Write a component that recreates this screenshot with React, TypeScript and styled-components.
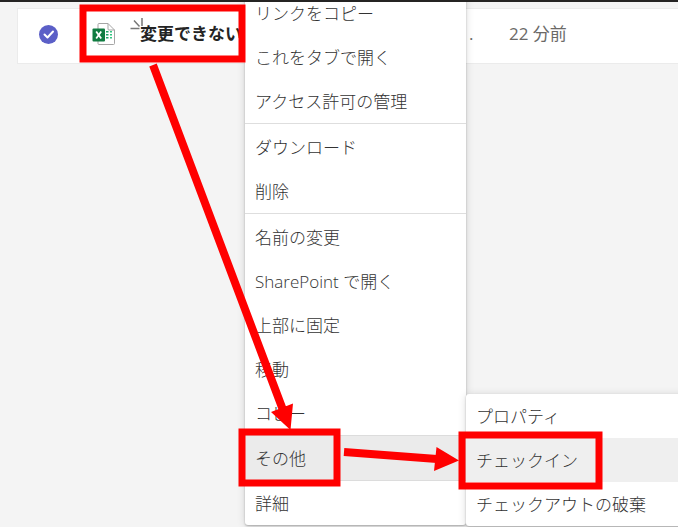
import React from "react";
import styled, { createGlobalStyle } from "styled-components";

const GlobalStyle = createGlobalStyle`
  * { box-sizing: border-box; }
  body {
    margin: 0;
    background: #f4f4f4;
    color: #333;
    font: 300 17px/24px "Open Sans", "Noto Sans CJK JP", sans-serif;
  }
  button { font: inherit; color: inherit; }
`;

const Page = styled.div`
  position: relative;
  min-height: 100vh;
  overflow: hidden;
`;

const TopEdge = styled.header`
  position: relative;
  z-index: 3;
  height: 2px;
  background: #252423;
`;

const FileRow = styled.div`
  display: grid;
  grid-template-columns: 60px 62px 329px 40px 1fr;
  align-items: center;
  height: 56px;
  margin: 6px 0 0 17px;
  padding-bottom: 4px;
  background: #fff;
  border: solid #ebebeb;
  border-width: 1px 0 1px 1px;
`;

const CheckLabel = styled.label`
  display: grid;
  place-items: center;
  > * { grid-area: 1 / 1; }
`;

const CheckInput = styled.input`
  appearance: none;
  width: 19px;
  height: 19px;
  margin: 0;
  border-radius: 50%;
  background: #5b5fc7;
`;

const CheckMark = styled.svg`
  pointer-events: none;
`;

const IconCell = styled.div`
  display: flex;
  padding-left: 14px;
`;

const FileName = styled.a`
  position: relative;
  color: #242424;
  font-weight: 700;
  text-decoration: none;
  white-space: nowrap;
`;

const NewMark = styled.svg`
  position: absolute;
  left: -10px;
  top: -5px;
`;

const Muted = styled.span`
  color: #6b6967;
  font-weight: 400;
`;

const Panel = styled.ul`
  position: absolute;
  z-index: 1;
  margin: 0;
  padding: 0;
  list-style: none;
  background: #fff;
  border-radius: 3px;
  box-shadow: 0 1px 2px rgba(0, 0, 0, 0.25), 0 1px 9px rgba(0, 0, 0, 0.14);
`;

const Menu = styled(Panel)`
  left: 245px;
  top: -9px;
  width: 221px;
`;

const Submenu = styled(Panel)`
  left: 100%;
  top: -42px;
  width: 221px;
`;

const Entry = styled.li<{ $open?: boolean }>`
  position: relative;
  background: ${(p) => (p.$open ? "#ebebeb" : "transparent")};
  border: solid #dcdcdc;
  border-width: ${(p) => (p.$open ? "1px 0" : "0")};
`;

const Divider = styled.li<{ $after?: number }>`
  height: 1px;
  margin-bottom: ${(p) => p.$after ?? 0}px;
  background: #dedede;
`;

const MenuButton = styled.button<{ $active?: boolean }>`
  display: flex;
  align-items: center;
  justify-content: space-between;
  width: 100%;
  height: 44px;
  padding: 2px 15px 0 10px;
  border: 0;
  background: ${(p) => (p.$active ? "#efefef" : "transparent")};
  text-align: left;
  white-space: nowrap;
`;

const Annotations = styled.svg`
  position: absolute;
  z-index: 4;
  left: 0;
  top: 0;
  pointer-events: none;
`;

const linkItems = ["リンクをコピー", "これをタブで開く", "アクセス許可の管理"];
const fileItems = ["ダウンロード", "削除"];
const editItems = ["名前の変更", "SharePoint で開く", "上部に固定", "移動", "コピー"];
const moreItems = ["プロパティ", "チェックイン", "チェックアウトの破棄"];

function Entries({ items, active }: { items: string[]; active?: string }) {
  return (
    <>
      {items.map((label) => (
        <Entry key={label}>
          <MenuButton $active={label === active}>{label}</MenuButton>
        </Entry>
      ))}
    </>
  );
}

function ExcelIcon() {
  return (
    <svg width="24" height="24" viewBox="0 0 24 24" aria-label="Excel" role="img">
      <path d="M7 1.500h9L22.500 8v13.500a1 1 0 0 1-1 1H7a1 1 0 0 1-1-1v-19a1 1 0 0 1 1-1z" fill="#fff" stroke="#a5a5a5" />
      <path d="M16 1.500v5.500a1 1 0 0 0 1 1h5.500" fill="none" stroke="#a5a5a5" />
      <path d="M14 9h2.500v1.500h-2.500zM14 12h2.500v1.500h-2.500zM14 15h2.500v1.500h-2.500z" fill="#21a366" />
      <path d="M18 9h2v1.500h-2zM18 12h2v1.500h-2zM18 15h2v1.500h-2z" fill="#33c481" />
      <rect x="0.500" y="6.500" width="12.500" height="13" rx="1" fill="#107c41" />
      <path d="M4.200 9.500l5 7M9.200 9.500l-5 7" stroke="#fff" strokeWidth="1.800" />
    </svg>
  );
}

export default function App() {
  return (
    <Page>
      <GlobalStyle />
      <TopEdge />
      <FileRow>
        <CheckLabel aria-label="変更できないを選択">
          <CheckInput type="checkbox" defaultChecked />
          <CheckMark width="19" height="19" viewBox="0 0 19 19">
            <path d="M5.500 9.500l3 3 5.500-6" fill="none" stroke="#fff" strokeWidth="2" strokeLinecap="round" strokeLinejoin="round" />
          </CheckMark>
        </CheckLabel>
        <IconCell><ExcelIcon /></IconCell>
        <FileName href="#">
          <NewMark width="14" height="14" viewBox="0 0 14 14" fill="none" stroke="#777" strokeWidth="1.500">
            <path d="M0.500 11.500h9M4 3.500l5.500 6M12 1v8" />
          </NewMark>
          変更できない
        </FileName>
        <Muted>.</Muted>
        <Muted>22 分前</Muted>
      </FileRow>

      <Menu>
        <Entries items={linkItems} />
        <Divider $after={1} />
        <Entries items={fileItems} />
        <Divider $after={1} />
        <Entries items={editItems} />
        <Entry $open>
          <MenuButton aria-haspopup="true" aria-expanded="true">
            その他
            <svg width="6" height="14" viewBox="0 0 6 14" fill="none" stroke="#777">
              <path d="M0.500 1l5 6-5 6" />
            </svg>
          </MenuButton>
          <Submenu>
            <Entries items={moreItems} active="チェックイン" />
          </Submenu>
        </Entry>
        <Entries items={["詳細"]} />
      </Menu>

      <Annotations width="678" height="527" viewBox="0 0 678 527" fill="none" stroke="#f00" strokeWidth="7" aria-hidden="true">
        <rect x="83" y="8" width="159" height="51" />
        <rect x="242" y="432" width="95" height="51" />
        <rect x="462" y="435" width="137" height="51" />
        <path d="M153 65L283 410M344 452L437 459" strokeWidth="8" />
        <path d="M271 412L293 403.500L290.500 430zM436.500 447L434 471L459 460.500z" fill="#f00" stroke="none" />
      </Annotations>
    </Page>
  );
}
